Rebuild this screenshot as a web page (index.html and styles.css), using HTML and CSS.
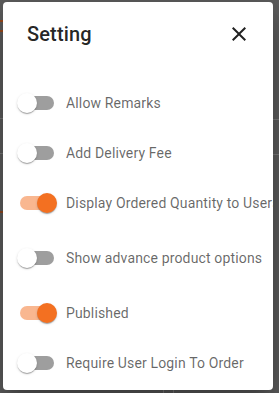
FILE: index.html
```html
<!DOCTYPE html>
<html>
<head>
<meta charset="utf-8">
<link rel="stylesheet" href="styles.css">
</head>
<body>
<div class="backdrop">
  <div class="bg-mark bg-o1"></div>
  <div class="bg-mark bg-o2"></div>
  <div class="bg-mark bg-l1"></div>
  <div class="bg-mark bg-l2"></div>
  <div class="bg-mark bg-o3"></div>
  <div class="bg-mark bg-r1"></div>
  <div class="bg-mark bg-r2"></div>
  <div class="bg-mark bg-v1"></div>
  <div class="bg-mark bg-v2"></div>
</div>
<div class="dialog">
  <div class="title-row">
    <h2 class="title">Setting</h2>
    <button class="close" aria-label="close">
      <svg viewBox="0 0 24 24" width="24" height="24"><path d="M19 6.41 17.59 5 12 10.59 6.41 5 5 6.41 10.59 12 5 17.59 6.41 19 12 13.41 17.59 19 19 17.59 13.41 12z" fill="currentColor"/></svg>
    </button>
  </div>
  <div class="content">
    <label class="row"><span class="switch"><span class="track"></span><span class="thumb"></span></span><span class="label">Allow Remarks</span></label>
    <label class="row"><span class="switch"><span class="track"></span><span class="thumb"></span></span><span class="label">Add Delivery Fee</span></label>
    <label class="row"><span class="switch on"><span class="track"></span><span class="thumb"></span></span><span class="label">Display Ordered Quantity to Users</span></label>
    <label class="row spaced"><span class="switch"><span class="track"></span><span class="thumb"></span></span><span class="label">Show advance product options</span></label>
    <label class="row spaced"><span class="switch on"><span class="track"></span><span class="thumb"></span></span><span class="label">Published</span></label>
    <label class="row"><span class="switch"><span class="track"></span><span class="thumb"></span></span><span class="label">Require User Login To Order</span></label>
  </div>
</div>
</body>
</html>
```
FILE: styles.css
```css
html, body {
  margin: 0;
  padding: 0;
}
body {
  width: 279px;
  height: 393px;
  background: #5d5d5d;
  font-family: Roboto, "Noto Sans", sans-serif;
  overflow: hidden;
  position: relative;
  padding-top: 2px;
  box-sizing: border-box;
}
.backdrop {
  position: absolute;
  inset: 0;
}
.bg-mark {
  position: absolute;
  background: #7a7a7a;
}
.bg-o1 { left: 0; top: 20px; width: 3px; height: 2px; background: #9b4a1c; }
.bg-o2 { left: 0; top: 30px; width: 3px; height: 2px; background: #9b4a1c; }
.bg-l1 { left: 0; top: 118px; width: 3px; height: 1px; }
.bg-l2 { left: 0; top: 153px; width: 3px; height: 1px; }
.bg-o3 { left: 0; top: 211px; width: 3px; height: 2px; background: #8e4a22; }
.bg-r1 { right: 0; top: 119px; width: 6px; height: 1px; }
.bg-r2 { right: 0; top: 154px; width: 6px; height: 1px; }
.bg-v1 { left: 163px; top: 390px; width: 1px; height: 3px; }
.bg-v2 { left: 173px; top: 390px; width: 1px; height: 3px; }

.dialog {
  position: relative;
  margin-left: 3px;
  width: 270px;
  height: 388px;
  background: #fff;
  border-radius: 4px;
  overflow: hidden;
  box-shadow: 0 11px 15px -7px rgba(0,0,0,0.2), 0 24px 38px 3px rgba(0,0,0,0.14), 0 9px 46px 8px rgba(0,0,0,0.12);
  box-sizing: border-box;
}
.title-row {
  display: flex;
  align-items: center;
  justify-content: space-between;
  padding: 16px 22px 0 24px;
  height: 32px;
}
.title {
  margin: 0;
  font-size: 20px;
  font-weight: 500;
  line-height: 32px;
  letter-spacing: 0.15px;
  color: rgba(0,0,0,0.87);
}
.close {
  border: 0;
  background: none;
  padding: 0;
  width: 24px;
  height: 24px;
  color: rgba(0,0,0,0.87);
  display: block;
}
.close svg { display: block; }
.content {
  display: flex;
  flex-direction: column;
  gap: 12px;
  padding: 34px 0 0 5px;
}
.row {
  display: flex;
  align-items: center;
  height: 38px;
  white-space: nowrap;
}
.row.spaced { margin-top: 5px; }
.switch {
  position: relative;
  width: 58px;
  height: 38px;
  flex: none;
}
.track {
  position: absolute;
  left: 12px;
  top: 12px;
  width: 34px;
  height: 14px;
  border-radius: 7px;
  background: #000;
  opacity: 0.38;
}
.thumb {
  position: absolute;
  left: 9px;
  top: 9px;
  width: 20px;
  height: 20px;
  border-radius: 50%;
  background: #fff;
  box-shadow: 0 2px 1px -1px rgba(0,0,0,0.2), 0 1px 1px 0 rgba(0,0,0,0.14), 0 1px 3px 0 rgba(0,0,0,0.12);
}
.switch.on .track {
  background: #f37021;
  opacity: 0.5;
}
.switch.on .thumb {
  left: 29px;
  background: #f37021;
}
.label {
  font-size: 14px;
  line-height: 20px;
  letter-spacing: 0.15px;
  color: rgba(0,0,0,0.6);
}
```
